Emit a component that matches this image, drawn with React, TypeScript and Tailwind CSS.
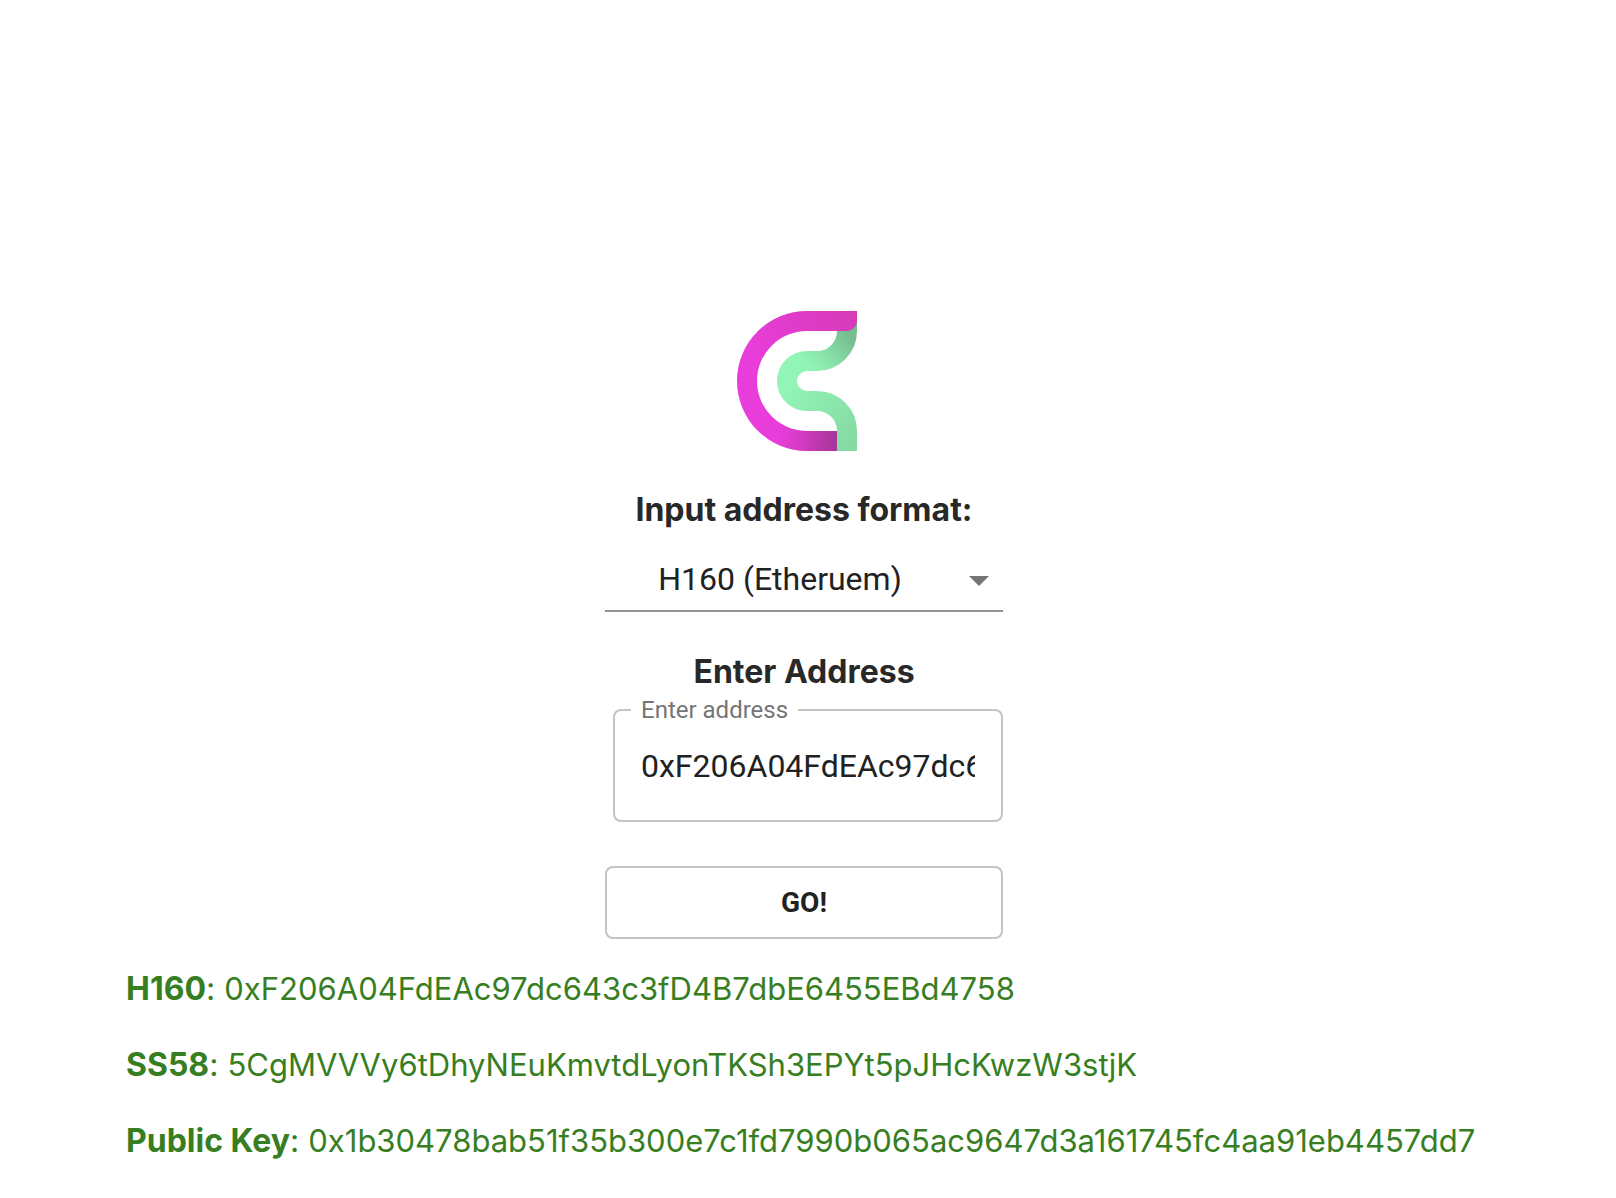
import { useState } from "react";

const results = [
  { label: "H160", value: "0xF206A04FdEAc97dc643c3fD4B7dbE6455EBd4758" },
  { label: "SS58", value: "5CgMVVVy6tDhyNEuKmvtdLyonTKSh3EPYt5pJHcKwzW3stjK" },
  {
    label: "Public Key",
    value: "0x1b30478bab51f35b300e7c1fd7990b065ac9647d3a161745fc4aa91eb4457dd7",
  },
];

function Logo() {
  return (
    <svg width="134" height="140" viewBox="0 0 134 140" role="img" aria-label="Logo">
      <defs>
        <linearGradient id="greenTop" gradientUnits="userSpaceOnUse" x1="70" y1="55" x2="112" y2="22">
          <stop offset="0" stopColor="#92f4b6" />
          <stop offset="0.35" stopColor="#8ae6ab" />
          <stop offset="1" stopColor="#76bc8f" />
        </linearGradient>
        <linearGradient id="greenBottom" gradientUnits="userSpaceOnUse" x1="55" y1="75" x2="115" y2="125">
          <stop offset="0" stopColor="#92f4b6" />
          <stop offset="1" stopColor="#86dba4" />
        </linearGradient>
        <linearGradient id="pink" gradientUnits="userSpaceOnUse" x1="20" y1="60" x2="120" y2="0">
          <stop offset="0" stopColor="#e93ddb" />
          <stop offset="1" stopColor="#d63bb7" />
        </linearGradient>
        <linearGradient id="pinkShade" gradientUnits="userSpaceOnUse" x1="40" y1="125" x2="100" y2="130">
          <stop offset="0" stopColor="#b8389f" stopOpacity="0" />
          <stop offset="0.35" stopColor="#b8389f" stopOpacity="0.35" />
          <stop offset="0.9" stopColor="#ab379d" />
        </linearGradient>
      </defs>
      <path d="M110 10V20A30 30 0 0 1 80 50H70A20 20 0 0 0 50 70" fill="none" stroke="url(#greenTop)" strokeWidth="20" />
      <path d="M50 69V70A20 20 0 0 0 70 90H80A30 30 0 0 1 110 120V140" fill="none" stroke="url(#greenBottom)" strokeWidth="20" />
      <path d="M120 0V10A10 10 0 0 1 110 20H70A50 50 0 0 0 70 120H100V140H70A70 70 0 0 1 70 0Z" fill="url(#pink)" />
      <path d="M40 110.1A50 50 0 0 0 70 120H100V140H70A70 70 0 0 1 40 133.2Z" fill="url(#pinkShade)" />
    </svg>
  );
}

export default function App() {
  const [format, setFormat] = useState("h160");
  const [address, setAddress] = useState(results[0].value);

  return (
    <main className="flex min-h-screen flex-col items-center bg-white pt-[311px] pr-6 pl-4 font-['Inter',sans-serif] text-[32px] leading-10 text-[#282828]">
      <Logo />
      <form
        className="mt-[39px] flex w-full max-w-[398px] flex-col items-center"
        onSubmit={(event) => event.preventDefault()}
      >
        <label htmlFor="format" className="font-bold whitespace-nowrap">
          Input address format:
        </label>
        <div className="mt-5 grid w-full items-center border-b-2 border-[#949494] font-['Roboto',sans-serif] text-[#212121]">
          <select
            id="format"
            value={format}
            onChange={(event) => setFormat(event.target.value)}
            className="col-start-1 row-start-1 h-[60px] w-full appearance-none bg-transparent pr-12 pb-0.5 text-center outline-none"
          >
            <option value="h160">H160 (Etheruem)</option>
            <option value="ss58">SS58 (Substrate)</option>
          </select>
          <svg
            viewBox="0 0 24 24"
            className="pointer-events-none col-start-1 row-start-1 size-12 justify-self-end fill-[#757575]"
            aria-hidden="true"
          >
            <path d="M7 10l5 5 5-5z" />
          </svg>
        </div>
        <h2 className="mt-10 font-bold">Enter Address</h2>
        <div className="mt-0.5 w-full pl-2 font-['Roboto',sans-serif]">
          <fieldset className="h-[128px] rounded-lg border-2 border-[#c4c4c4] px-4">
            <legend className="px-[10px] text-2xl leading-8 text-[#757575]">
              <label htmlFor="address">Enter address</label>
            </legend>
            <div className="px-[10px] pt-4">
              <input
                id="address"
                type="text"
                value={address}
                onChange={(event) => setAddress(event.target.value)}
                className="h-12 w-full bg-transparent text-[#212121] outline-none"
              />
            </div>
          </fieldset>
        </div>
        <button
          type="submit"
          className="mt-11 h-[73px] w-full rounded-lg border-2 border-[#c4c4c4] font-['Roboto',sans-serif] text-[28px] font-bold text-[#212121]"
        >
          GO!
        </button>
      </form>
      <dl className="mt-[30px] flex w-full max-w-[1356px] flex-col gap-9 text-[31px] text-[#377e22]">
        {results.map(({ label, value }) => (
          <div key={label} className="flex whitespace-pre">
            <dt className="text-[32px]">
              <span className="font-bold">{label}</span>:{" "}
            </dt>
            <dd>{value}</dd>
          </div>
        ))}
      </dl>
    </main>
  );
}
